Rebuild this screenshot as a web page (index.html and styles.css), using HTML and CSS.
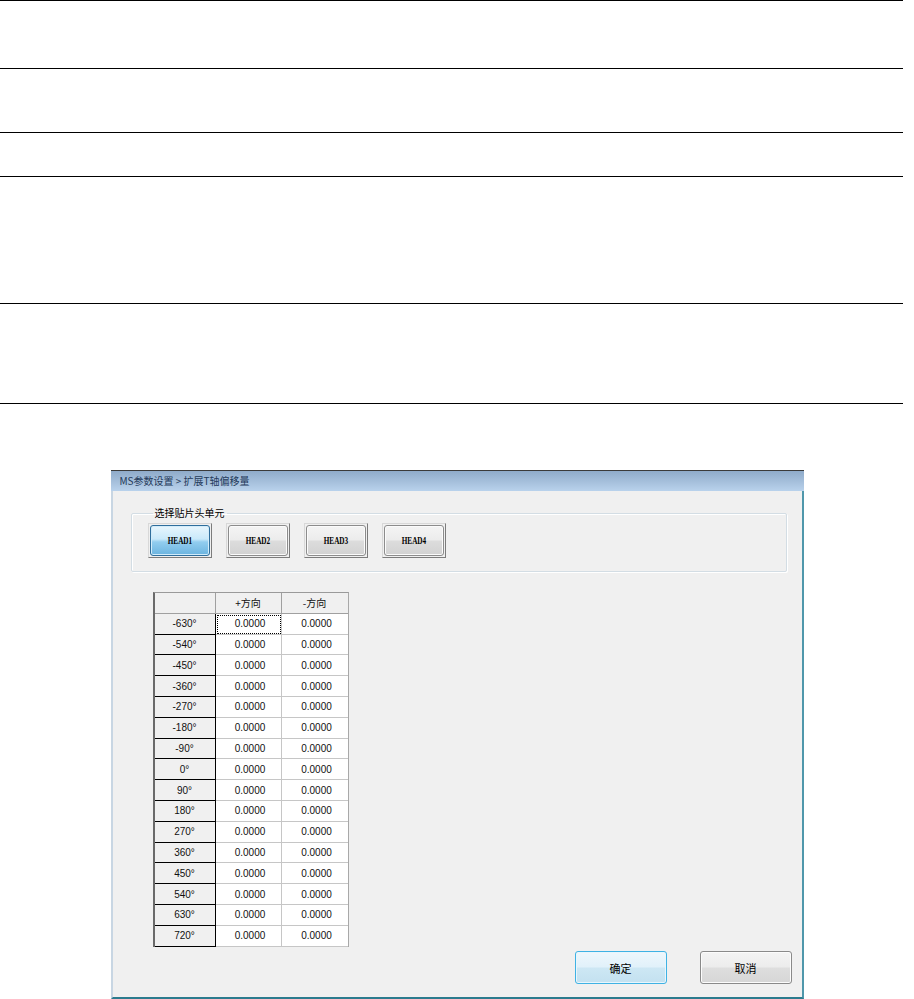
FILE: index.html
```html
<!DOCTYPE html>
<html lang="zh-CN">
<head>
<meta charset="utf-8">
<title>MS参数设置 &gt; 扩展T轴偏移量</title>
<link rel="stylesheet" href="styles.css">
</head>
<body>
<div class="doc">
  <div class="doc-row r1"></div>
  <div class="doc-row r2"></div>
  <div class="doc-row r3"></div>
  <div class="doc-row r4"></div>
  <div class="doc-row r5"></div>
</div>
<div class="figure">
  <div class="dialog">
    <div class="titlebar">MS参数设置 &gt; 扩展T轴偏移量</div>
    <div class="dialog-body">
      <fieldset class="group">
        <legend>选择贴片头单元</legend>
        <div class="head-row">
          <div class="head-frame"><button class="head-btn active"><span>HEAD1</span></button></div>
          <div class="head-frame"><button class="head-btn"><span>HEAD2</span></button></div>
          <div class="head-frame"><button class="head-btn"><span>HEAD3</span></button></div>
          <div class="head-frame"><button class="head-btn"><span>HEAD4</span></button></div>
        </div>
      </fieldset>
      <div class="grid">
        <div class="cell corner"></div><div class="cell colhead">+方向</div><div class="cell colhead last">-方向</div>
        <div class="cell rowhead">-630°</div><div class="cell data focus">0.0000</div><div class="cell data last">0.0000</div>
        <div class="cell rowhead">-540°</div><div class="cell data">0.0000</div><div class="cell data last">0.0000</div>
        <div class="cell rowhead">-450°</div><div class="cell data">0.0000</div><div class="cell data last">0.0000</div>
        <div class="cell rowhead">-360°</div><div class="cell data">0.0000</div><div class="cell data last">0.0000</div>
        <div class="cell rowhead">-270°</div><div class="cell data">0.0000</div><div class="cell data last">0.0000</div>
        <div class="cell rowhead">-180°</div><div class="cell data">0.0000</div><div class="cell data last">0.0000</div>
        <div class="cell rowhead">-90°</div><div class="cell data">0.0000</div><div class="cell data last">0.0000</div>
        <div class="cell rowhead">0°</div><div class="cell data">0.0000</div><div class="cell data last">0.0000</div>
        <div class="cell rowhead">90°</div><div class="cell data">0.0000</div><div class="cell data last">0.0000</div>
        <div class="cell rowhead">180°</div><div class="cell data">0.0000</div><div class="cell data last">0.0000</div>
        <div class="cell rowhead">270°</div><div class="cell data">0.0000</div><div class="cell data last">0.0000</div>
        <div class="cell rowhead">360°</div><div class="cell data">0.0000</div><div class="cell data last">0.0000</div>
        <div class="cell rowhead">450°</div><div class="cell data">0.0000</div><div class="cell data last">0.0000</div>
        <div class="cell rowhead">540°</div><div class="cell data">0.0000</div><div class="cell data last">0.0000</div>
        <div class="cell rowhead">630°</div><div class="cell data">0.0000</div><div class="cell data last">0.0000</div>
        <div class="cell rowhead">720°</div><div class="cell data">0.0000</div><div class="cell data last">0.0000</div>
      </div>
      <div class="actions">
        <button class="btn btn-primary">确定</button>
        <button class="btn">取消</button>
      </div>
    </div>
  </div>
</div>
</body>
</html>
```
FILE: styles.css
```css
html, body {
  margin: 0;
  padding: 0;
  background: #ffffff;
}
body {
  font-family: "Liberation Sans", "Noto Sans CJK SC", sans-serif;
  color: #000;
  width: 914px;
  height: 999px;
  overflow: hidden;
}
.doc {
  width: 903px;
  border-top: 1px solid #000;
}
.doc-row {
  border-bottom: 1px solid #000;
}
.r1 { height: 67px; }
.r2 { height: 63px; }
.r3 { height: 43px; }
.r4 { height: 126px; }
.r5 { height: 99px; }

.figure {
  padding-top: 66px;
}
.dialog {
  width: 693px;
  height: 529px;
  margin: 0 auto;
  border-top: 1px solid #3a3a3a;
  box-sizing: border-box;
  display: flex;
  flex-direction: column;
}
.titlebar {
  height: 20px;
  line-height: 20px;
  padding-left: 9px;
  font-family: "Noto Sans CJK SC", sans-serif;
  font-size: 10px;
  color: #243a5a;
  background: linear-gradient(to bottom, #8fabca 0%, #a6c0dc 55%, #b9d2ec 100%);
  flex: none;
}
.dialog-body {
  flex: 1;
  background: #f0f0f0;
  border-left: 2px solid #c8d6e3;
  border-right: 2px solid #4f97ab;
  border-bottom: 2px solid #2c7b8e;
  display: flex;
  flex-direction: column;
  min-height: 0;
}
.group {
  margin: 16px 15px 0 18px;
  padding: 4px 0 13px 16px;
  border: 1px solid #d3dde4;
  box-shadow: inset 1px 1px 0 #ffffff, 1px 1px 0 #ffffff;
  border-radius: 2px;
  min-width: 0;
}
.group legend {
  font-family: "Noto Sans CJK SC", sans-serif;
  font-size: 10px;
  line-height: 12px;
  padding: 0 2px;
  margin-left: 5px;
  color: #000;
}
.head-row {
  display: flex;
  gap: 14px;
}
.head-frame {
  width: 64px;
  height: 35px;
  box-sizing: border-box;
  border: 1px solid;
  border-color: #d8d8d8 #7c7c7c #7c7c7c #d8d8d8;
  padding: 1px;
  background: #f0f0f0;
}
.head-btn {
  display: flex;
  align-items: center;
  justify-content: center;
  width: 100%;
  height: 100%;
  margin: 0;
  padding: 0;
  box-sizing: border-box;
  border: 1px solid #8c8c8c;
  border-radius: 3px;
  background: linear-gradient(to bottom, #f4f4f4 0%, #ececec 48%, #dcdcdc 52%, #d2d2d2 100%);
  box-shadow: inset 0 0 0 1px #fbfbfb;
  font-family: "Liberation Serif", serif;
  font-weight: bold;
  font-size: 10px;
  color: #000;
}
.head-btn span {
  display: inline-block;
  transform: scaleX(0.72);
  letter-spacing: 0;
}
.head-btn.active {
  border-color: #2f6e9c;
  background: linear-gradient(to bottom, #e8f6fd 0%, #c9e9fa 45%, #92cdef 55%, #6bb4e0 100%);
  box-shadow: inset 0 0 0 1px #d2ecfa;
}

.grid {
  margin: 20px 0 0 40px;
  display: grid;
  grid-template-columns: 61px 66px 66px;
  grid-auto-rows: 20.8px;
  width: max-content;
  border-top: 1px solid #9a9a9a;
  border-left: 2px solid #6a6a6a;
  border-right: 1px solid #a8a8a8;
  background: #ffffff;
}
.cell {
  box-sizing: border-box;
  display: flex;
  align-items: center;
  justify-content: center;
  font-size: 10px;
  font-family: "Liberation Sans", "Noto Sans CJK SC", sans-serif;
  color: #111;
  border-right: 1px solid #c6c6c6;
  border-bottom: 1px solid #c6c6c6;
}
.cell.last {
  border-right: none;
}
.corner, .colhead {
  background: #f0f0f0;
  border-right-color: #a0a0a0;
  border-bottom-color: #a0a0a0;
}
.colhead {
  font-family: "Noto Sans CJK SC", sans-serif;
  font-size: 10px;
}
.rowhead {
  background: #f0f0f0;
  border-right: 1px solid #000;
  border-bottom: 1px solid #000;
}
.data {
  background: #fff;
  padding-left: 4px;
}
.focus {
  outline: 1px dotted #000;
  outline-offset: -2px;
}

.actions {
  margin-top: auto;
  display: flex;
  justify-content: flex-end;
  gap: 33px;
  padding: 0 10px 13px 0;
}
.btn {
  width: 92px;
  height: 33px;
  margin: 0;
  box-sizing: border-box;
  border: 1px solid #8a8a8a;
  border-radius: 3px;
  background: linear-gradient(to bottom, #f4f4f4 0%, #ececec 48%, #dedede 52%, #d6d6d6 100%);
  box-shadow: inset 0 0 0 1px #fcfcfc;
  font-family: "Noto Sans CJK SC", sans-serif;
  font-size: 11px;
  color: #000;
}
.btn-primary {
  border-color: #3fb2e4;
  background: linear-gradient(to bottom, #eef7fc 0%, #e1f1fa 48%, #cde7f4 52%, #c3e1f0 100%);
  box-shadow: inset 0 0 0 1px #e8f6fd;
}
```
